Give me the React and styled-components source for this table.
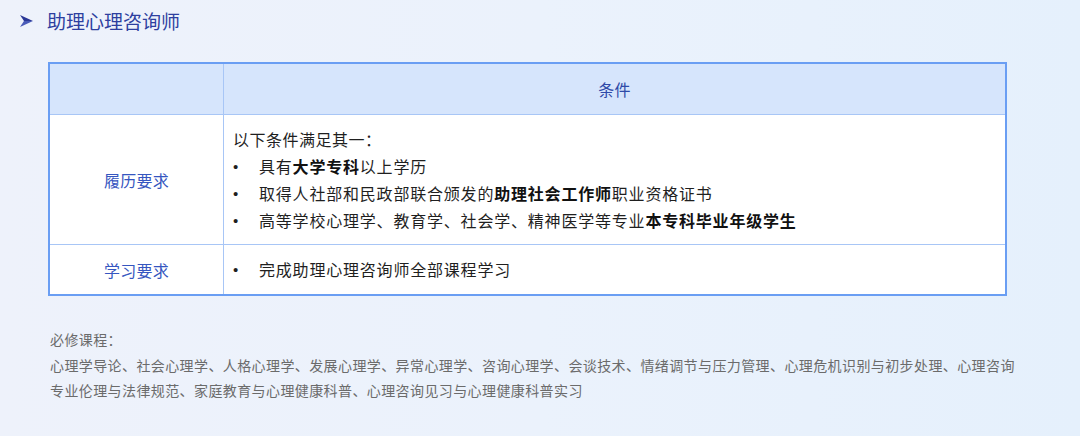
import React from "react";
import styled, { createGlobalStyle } from "styled-components";

const Global = createGlobalStyle`
  html, body { margin: 0; padding: 0; }
  body {
    width: 1080px;
    height: 436px;
    overflow: hidden;
    background: linear-gradient(90deg, #eef2fb 0%, #ebf2fc 50%, #e5f0fc 100%);
    font-family: "Noto Sans CJK SC", "Noto Sans", sans-serif;
  }
`;

const Page = styled.div`
  padding: 8px 0 0 0;
`;

const TitleRow = styled.div`
  display: flex;
  align-items: center;
  gap: 14px;
  padding-left: 20px;
  height: 26px;
`;

const TitleText = styled.h2`
  margin: 0;
  font-size: 19px;
  font-weight: 400;
  line-height: 26px;
  color: #2e3f9f;
`;

const Table = styled.div`
  margin: 28px 0 0 48px;
  width: 959px;
  box-sizing: border-box;
  border: 2px solid #6a9ef3;
  display: grid;
  grid-template-columns: 174px 1fr;
  background: #fff;
`;

const HeadCell = styled.div`
  height: 50px;
  background: #d6e5fc;
  border-bottom: 1px solid #a8c6f6;
  border-right: ${(p) => (p.$last ? "none" : "1px solid #a8c6f6")};
  display: flex;
  align-items: center;
  justify-content: center;
  font-size: 16px;
  letter-spacing: 0.3px;
  color: #2f4aa8;
`;

const LabelCell = styled.div`
  height: ${(p) => p.$h}px;
  border-right: 1px solid #a8c6f6;
  border-bottom: ${(p) => (p.$last ? "none" : "1px solid #a8c6f6")};
  display: flex;
  align-items: center;
  justify-content: center;
  font-size: 16px;
  letter-spacing: 0.3px;
  color: #3656c0;
`;

const ContentCell = styled.div`
  height: ${(p) => p.$h}px;
  box-sizing: border-box;
  border-bottom: ${(p) => (p.$last ? "none" : "1px solid #a8c6f6")};
  display: flex;
  flex-direction: column;
  justify-content: center;
  padding-left: 9px;
  font-size: 16px;
  letter-spacing: 0.8px;
  line-height: 27px;
  color: #1f1f1f;
`;

const Line = styled.div`
  white-space: nowrap;
  letter-spacing: 0.5px;
`;

const Bullet = styled.div`
  display: flex;
  white-space: nowrap;
  &::before {
    content: "•";
    font-family: "Liberation Sans", sans-serif;
    font-size: 15px;
    width: 26px;
    flex: none;
    letter-spacing: 0;
  }
`;

const B = styled.b`
  font-weight: 700;
  color: #111;
`;

const Notes = styled.div`
  margin: 31px 0 0 50px;
  font-size: 14px;
  letter-spacing: 0.4px;
  line-height: 25.5px;
  color: #6b6b6b;
`;

const Arrow = () => (
  <svg width="13" height="12" viewBox="0 0 13 12">
    <polygon points="0,0 13,6 4,6" fill="#2a3796" />
    <polygon points="0,12 13,6 4,6" fill="#4a5bb8" />
  </svg>
);

export default function App() {
  return (
    <>
      <Global />
      <Page>
        <TitleRow>
          <Arrow />
          <TitleText>助理心理咨询师</TitleText>
        </TitleRow>
        <Table>
          <HeadCell />
          <HeadCell $last>条件</HeadCell>

          <LabelCell $h={129}>履历要求</LabelCell>
          <ContentCell $h={130}>
            <Line>以下条件满足其一：</Line>
            <Bullet>
              <span>
                具有<B>大学专科</B>以上学历
              </span>
            </Bullet>
            <Bullet>
              <span>
                取得人社部和民政部联合颁发的<B>助理社会工作师</B>职业资格证书
              </span>
            </Bullet>
            <Bullet>
              <span>
                高等学校心理学、教育学、社会学、精神医学等专业<B>本专科毕业年级学生</B>
              </span>
            </Bullet>
          </ContentCell>

          <LabelCell $h={49} $last>学习要求</LabelCell>
          <ContentCell $h={49} $last>
            <Bullet>
              <span>完成助理心理咨询师全部课程学习</span>
            </Bullet>
          </ContentCell>
        </Table>
        <Notes>
          <div>必修课程：</div>
          <div>
            心理学导论、社会心理学、人格心理学、发展心理学、异常心理学、咨询心理学、会谈技术、情绪调节与压力管理、心理危机识别与初步处理、心理咨询
          </div>
          <div>专业伦理与法律规范、家庭教育与心理健康科普、心理咨询见习与心理健康科普实习</div>
        </Notes>
      </Page>
    </>
  );
}
